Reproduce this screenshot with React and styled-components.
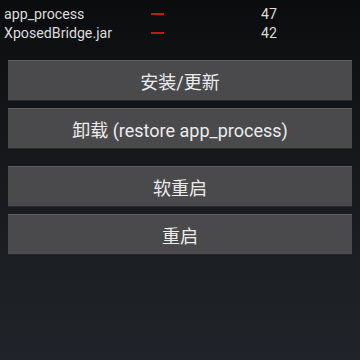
import React from "react";
import styled, { createGlobalStyle } from "styled-components";

const Global = createGlobalStyle`
  html, body { margin: 0; padding: 0; }
  body {
    width: 360px; height: 360px; overflow: hidden;
    background: linear-gradient(180deg, #0b0c0e 0%, #15171a 40%, #1c1f23 75%, #20242a 100%);
    font-family: Roboto, "Noto Sans CJK SC", sans-serif;
  }
`;

const Page = styled.div`
  width: 360px;
  height: 360px;
  display: flex;
  flex-direction: column;
`;

const Table = styled.div`
  margin-top: -14px;
  padding: 0 4px;
  display: flex;
  flex-direction: column;
`;

const Row = styled.div`
  display: grid;
  grid-template-columns: 147px 110px 1fr;
  height: 19px;
  align-items: ${(p) => (p.$header ? "start" : "center")};
  font-size: 14.2px;
  color: ${(p) => (p.$header ? "#bdbdbd" : "#dcdcdc")};
  line-height: ${(p) => (p.$header ? "13px" : "19px")};
`;

const Dash = styled.span`
  display: block;
  width: 13px;
  height: 2px;
  background: #c4161c;
  margin-top: -1px;
`;

const Buttons = styled.div`
  margin-top: 17px;
  padding: 0 8px;
  display: flex;
  flex-direction: column;
`;

const Button = styled.button`
  height: 40px;
  margin-top: ${(p) => p.$gap}px;
  border: none;
  border-top: 1px solid #5c5c5e;
  background: #4a4a4c;
  box-shadow: 0 1px 0 #2a2a2c;
  color: #ececec;
  font-family: Roboto, "Noto Sans CJK SC", sans-serif;
  font-size: 18px;
  padding: 0;
  display: flex;
  align-items: center;
  justify-content: center;
`;

export default function App() {
  return (
    <>
      <Global />
      <Page>
        <Table>
          <Row $header>
            <span>文件</span>
            <span>安装版本</span>
            <span>最新版本</span>
          </Row>
          <Row>
            <span>app_process</span>
            <span><Dash /></span>
            <span>47</span>
          </Row>
          <Row>
            <span>XposedBridge.jar</span>
            <span><Dash /></span>
            <span>42</span>
          </Row>
        </Table>
        <Buttons>
          <Button $gap={0}>安装/更新</Button>
          <Button $gap={8}>卸载 (restore app_process)</Button>
          <Button $gap={18}>软重启</Button>
          <Button $gap={8}>重启</Button>
        </Buttons>
      </Page>
    </>
  );
}
